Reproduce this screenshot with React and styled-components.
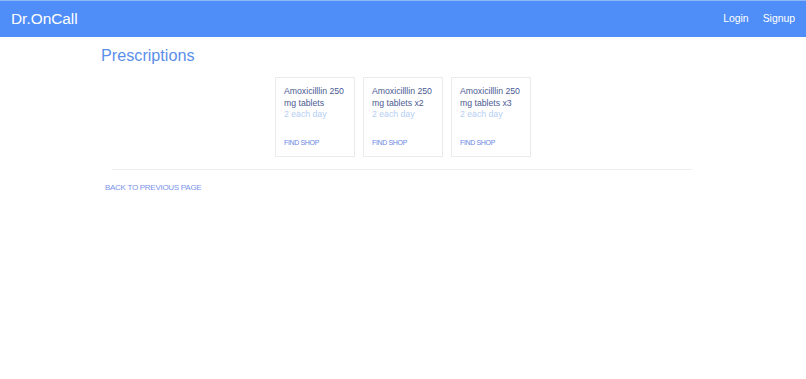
import React from "react";
import styled, { createGlobalStyle } from "styled-components";

const prescriptions = [
  { name: "Amoxicilllin 250 mg tablets", dose: "2 each day" },
  { name: "Amoxicilllin 250 mg tablets x2", dose: "2 each day" },
  { name: "Amoxicilllin 250 mg tablets x3", dose: "2 each day" },
];

export default function App() {
  return (
    <>
      <GlobalStyle />
      <Nav>
        <Brand>Dr.OnCall</Brand>
        <NavLinks>
          <NavLink>Login</NavLink>
          <NavLink>Signup</NavLink>
        </NavLinks>
      </Nav>
      <Container>
        <Title>Prescriptions</Title>
        <Cards>
          {prescriptions.map((item, index) => (
            <Card key={index}>
              <CardTitle>{item.name}</CardTitle>
              <Dose>{item.dose}</Dose>
              <CardAction>FIND SHOP</CardAction>
            </Card>
          ))}
        </Cards>
        <Divider />
        <BackLink>BACK TO PREVIOUS PAGE</BackLink>
      </Container>
    </>
  );
}

const GlobalStyle = createGlobalStyle`
  body {
    margin: 0;
    background: #ffffff;
    font-family: "Liberation Sans", Arial, sans-serif;
  }
`;

const Nav = styled.nav`
  display: flex;
  align-items: center;
  justify-content: space-between;
  height: 37px;
  padding: 0 11px;
  background: #4f8ef8;
  border-top: 1px solid #8fb6f5;
  box-sizing: border-box;
`;

const Brand = styled.div`
  color: #ffffff;
  font-size: 15.4px;
  line-height: 20px;
`;

const NavLinks = styled.div`
  display: flex;
  gap: 14px;
`;

const NavLink = styled.a`
  color: #ffffff;
  font-size: 10.4px;
  line-height: 14px;
  cursor: pointer;
`;

const Container = styled.div`
  width: 604px;
  margin: 0 auto;
`;

const Title = styled.h1`
  margin: 0;
  padding-top: 8px;
  font-size: 16.2px;
  line-height: 20px;
  font-weight: normal;
  color: #5b8fea;
`;

const Cards = styled.div`
  display: flex;
  justify-content: center;
  gap: 8px;
  margin-top: 12px;
`;

const Card = styled.div`
  width: 80px;
  height: 80px;
  box-sizing: border-box;
  padding: 8px 8px 0 8px;
  border: 1px solid #e9ebef;
  display: flex;
  flex-direction: column;
`;

const CardTitle = styled.div`
  font-size: 8.7px;
  line-height: 11.5px;
  color: #4c5b94;
`;

const Dose = styled.div`
  font-size: 8.7px;
  line-height: 11.5px;
  color: #b5cef3;
`;

const CardAction = styled.a`
  margin-top: 16px;
  font-size: 7px;
  letter-spacing: -0.35px;
  line-height: 11px;
  color: #6a87e2;
  cursor: pointer;
`;

const Divider = styled.hr`
  margin: 12px 13px 0 11px;
  border: 0;
  border-top: 1px solid #eeeeee;
`;

const BackLink = styled.a`
  display: block;
  margin: 13px 0 0 4px;
  font-size: 8px;
  letter-spacing: -0.28px;
  line-height: 10px;
  color: #7a93ea;
  cursor: pointer;
`;
